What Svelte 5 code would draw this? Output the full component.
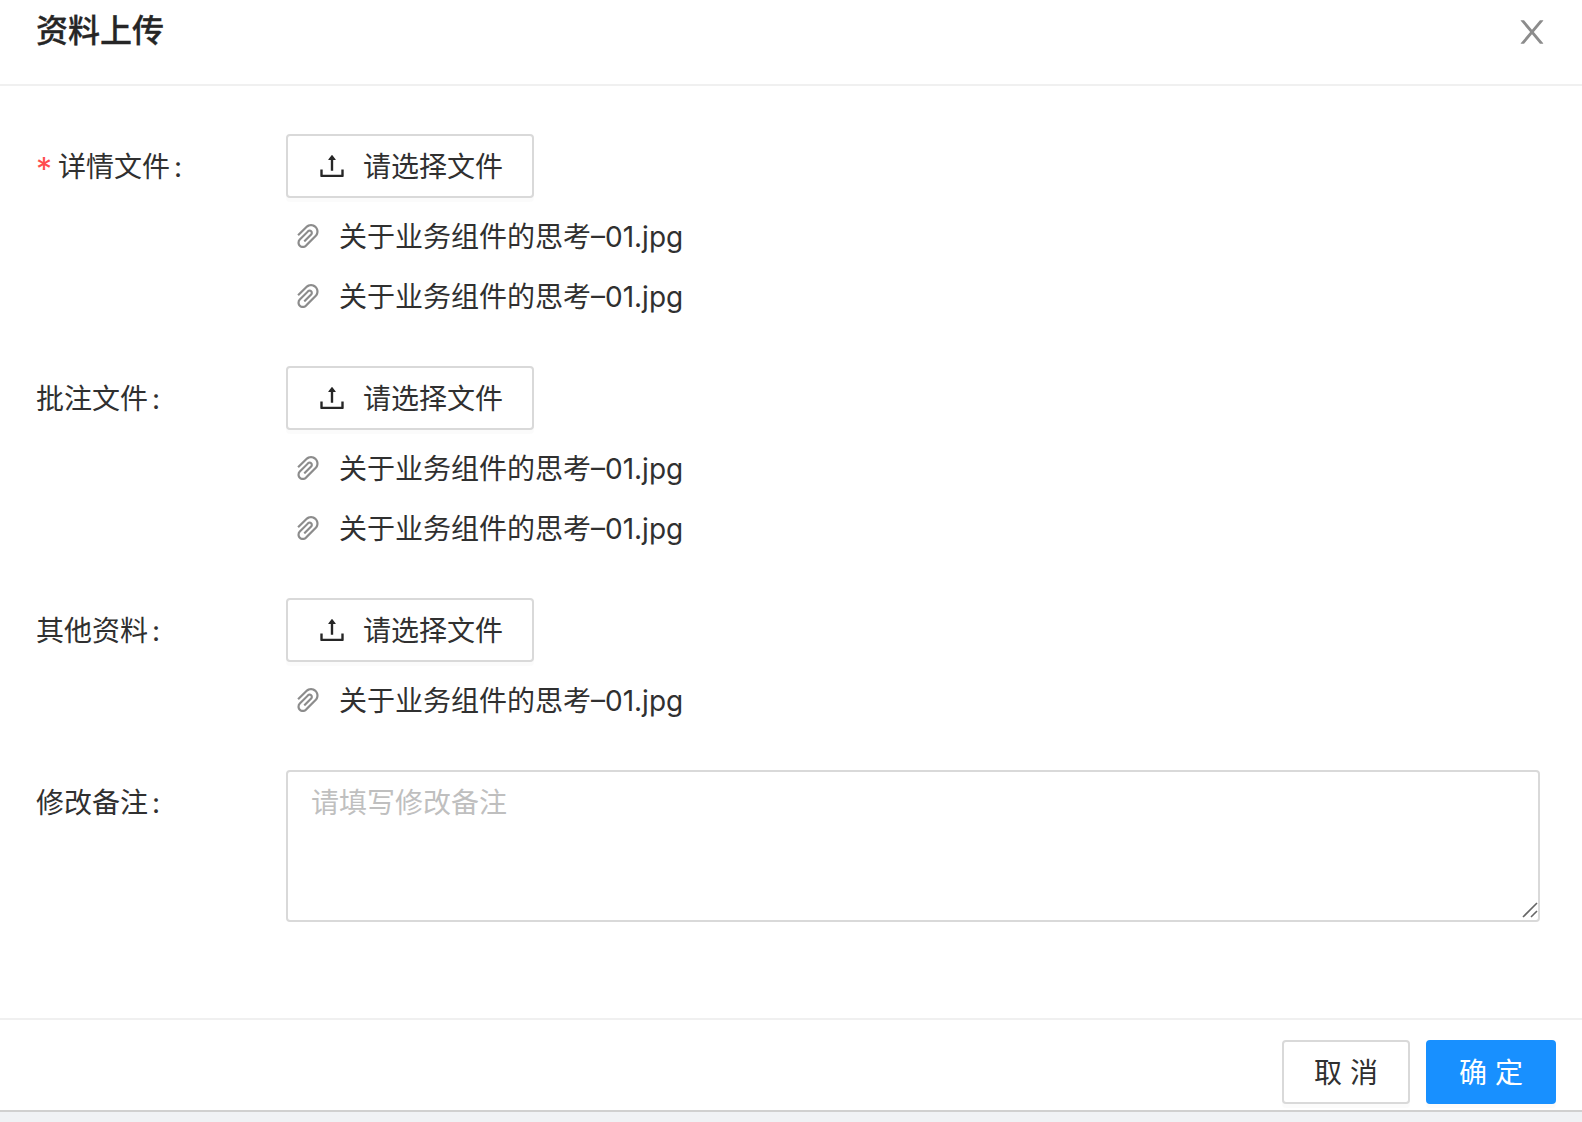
<script>
  const sections = [
    { label: '详情文件', required: true, files: ['关于业务组件的思考–01.jpg', '关于业务组件的思考–01.jpg'] },
    { label: '批注文件', required: false, files: ['关于业务组件的思考–01.jpg', '关于业务组件的思考–01.jpg'] },
    { label: '其他资料', required: false, files: ['关于业务组件的思考–01.jpg'] }
  ];
</script>

<div class="page">
  <div class="modal">
    <header class="modal-header">
      <h2 class="modal-title">资料上传</h2>
      <button class="close-btn" aria-label="关闭">
        <svg viewBox="64 64 896 896" width="32" height="32" fill="#8c8c8c">
          <path d="M563.8 512l262.5-312.9c4.4-5.2.7-13.1-6.1-13.1h-79.8c-4.7 0-9.2 2.1-12.3 5.7L511.6 449.8 295.1 191.7c-3-3.6-7.5-5.7-12.3-5.7H203c-6.8 0-10.5 7.9-6.1 13.1L459.4 512 196.9 824.9A7.95 7.95 0 0 0 203 838h79.8c4.7 0 9.2-2.1 12.3-5.7l216.5-258.1 216.5 258.1c3 3.6 7.5 5.7 12.3 5.7h79.8c6.8 0 10.5-7.9 6.1-13.1L563.8 512z" />
        </svg>
      </button>
    </header>

    <div class="modal-body">
      {#each sections as section}
        <div class="form-row">
          <div class="form-label">
            {#if section.required}<span class="required">*</span>{/if}{section.label}<span class="colon">:</span>
          </div>
          <div class="form-control">
            <button class="upload-btn">
              <svg viewBox="64 64 896 896" width="28" height="28" fill="#262626">
                <path d="M400 317.7h73.9V656c0 4.4 3.6 8 8 8h60c4.4 0 8-3.6 8-8V317.7H624c6.7 0 10.4-7.7 6.3-12.9L518.3 163a8 8 0 0 0-12.6 0l-112 141.7c-4.1 5.3-.4 13 6.3 13zM878 626h-60c-4.4 0-8 3.6-8 8v154H214V634c0-4.4-3.6-8-8-8h-60c-4.4 0-8 3.6-8 8v198c0 17.7 14.3 32 32 32h684c17.7 0 32-14.3 32-32V634c0-4.4-3.6-8-8-8z" />
              </svg>
              <span>请选择文件</span>
            </button>
            <ul class="file-list">
              {#each section.files as file}
                <li class="file-item">
                  <svg viewBox="64 64 896 896" width="28" height="28" fill="#8c8c8c">
                    <path d="M779.3 196.6c-94.2-94.2-247.6-94.2-341.7 0l-261 260.8c-1.7 1.7-2.6 4-2.6 6.4s.9 4.7 2.6 6.4l36.9 36.9a9 9 0 0 0 12.7 0l261-260.8c32.4-32.4 75.5-50.2 121.3-50.2s88.9 17.8 121.2 50.2c32.4 32.4 50.2 75.5 50.2 121.2 0 45.8-17.8 88.8-50.2 121.2l-266 265.9-43.1 43.1c-40.3 40.3-105.8 40.3-146.1 0-19.5-19.5-30.2-45.4-30.2-73s10.7-53.5 30.2-73l263.9-263.8c6.7-6.6 15.5-10.3 24.9-10.3h.1c9.4 0 18.1 3.7 24.7 10.3 6.7 6.7 10.3 15.5 10.3 24.9 0 9.3-3.7 18.1-10.3 24.7L372.4 653c-1.7 1.7-2.6 4-2.6 6.4s.9 4.7 2.6 6.4l36.9 36.9a9 9 0 0 0 12.7 0l215.6-215.6c19.9-19.9 30.8-46.3 30.8-74.4s-11-54.6-30.8-74.4c-41.1-41.1-107.9-41-149 0L463 364 224.8 602.1A172.22 172.22 0 0 0 174 724.8c0 46.3 18.1 89.8 50.8 122.5 33.9 33.8 78.3 50.7 122.7 50.7 44.4 0 88.8-16.9 122.6-50.7l309.2-309C824.8 492.7 850 432 850 367.5c.1-64.6-25.1-125.3-70.7-170.9z" />
                  </svg>
                  <span class="file-name">{file}</span>
                </li>
              {/each}
            </ul>
          </div>
        </div>
      {/each}

      <div class="form-row">
        <div class="form-label">修改备注<span class="colon">:</span></div>
        <div class="form-control note-wrap">
          <textarea class="note" placeholder="请填写修改备注"></textarea>
          <svg class="resizer" viewBox="0 0 16 16" width="16" height="16" fill="none" stroke="#666" stroke-width="1.6">
            <path d="M1 15 L15 1 M9 15 L15 9" />
          </svg>
        </div>
      </div>
    </div>

    <footer class="modal-footer">
      <button class="btn">取 消</button>
      <button class="btn primary">确 定</button>
    </footer>
  </div>
</div>

<style>
  :global(body) {
    margin: 0;
    background: #f0f2f5;
  }
  .page {
    height: 1122px;
    font-family: Inter, "Noto Sans CJK SC", sans-serif;
    font-size: 28px;
    color: #303030;
  }
  .modal {
    height: 1110px;
    background: #fff;
    border-bottom: 2px solid #d0d0d0;
    display: flex;
    flex-direction: column;
  }
  .modal-header {
    height: 86px;
    box-sizing: border-box;
    border-bottom: 2px solid #f0f0f0;
    padding: 0 34px 0 36px;
    display: flex;
    justify-content: space-between;
    align-items: flex-start;
  }
  .modal-title {
    margin: 8px 0 0;
    font-size: 32px;
    line-height: 46px;
    font-weight: 500;
    color: #262626;
    -webkit-text-stroke: 0.3px #262626;
  }
  .close-btn {
    margin-top: 16px;
    padding: 0;
    border: none;
    background: none;
    line-height: 0;
  }
  .modal-body {
    flex: 1;
    padding: 48px 42px 0 36px;
  }
  .form-row {
    display: flex;
    margin-bottom: 40px;
  }
  .form-label {
    width: 250px;
    flex: none;
    line-height: 66px;
    white-space: nowrap;
  }
  .required {
    color: #ff4d4f;
    font-size: 32px;
    line-height: 1;
    margin-right: 6px;
    vertical-align: -4px;
  }
  .colon {
    margin-left: 4px;
  }
  .form-control {
    flex: 1;
  }
  .upload-btn {
    width: 248px;
    height: 64px;
    box-sizing: border-box;
    background: #fff;
    border: 2px solid #d9d9d9;
    border-radius: 4px;
    box-shadow: 0 4px 0 rgba(0, 0, 0, 0.015);
    font: inherit;
    color: inherit;
    display: flex;
    align-items: center;
    justify-content: center;
    gap: 17px;
    padding: 0 0 0 1px;
  }
  .upload-btn span {
    position: relative;
    top: -1px;
  }
  .file-list {
    list-style: none;
    margin: 8px 0 0;
    padding: 0;
  }
  .file-item {
    height: 60px;
    display: flex;
    align-items: center;
    gap: 17px;
    padding-left: 8px;
  }
  .file-name {
    position: relative;
    top: -1px;
  }
  .note-wrap {
    position: relative;
  }
  .note {
    display: block;
    width: 100%;
    height: 152px;
    box-sizing: border-box;
    border: 2px solid #d9d9d9;
    border-radius: 4px;
    padding: 10px 23px;
    font: inherit;
    line-height: 42px;
    color: inherit;
    outline: none;
    resize: none;
  }
  .note::placeholder {
    color: #bfbfbf;
  }
  .resizer {
    position: absolute;
    right: 2px;
    bottom: 4px;
  }
  .modal-footer {
    height: 92px;
    box-sizing: border-box;
    border-top: 2px solid #f0f0f0;
    padding: 20px 26px 0 0;
    display: flex;
    justify-content: flex-end;
    gap: 16px;
  }
  .btn {
    height: 64px;
    width: 128px;
    box-sizing: border-box;
    background: #fff;
    border: 2px solid #d9d9d9;
    border-radius: 4px;
    font: inherit;
    color: inherit;
    padding: 0 0 3px;
    box-shadow: 0 4px 0 rgba(0, 0, 0, 0.015);
  }
  .btn.primary {
    width: 130px;
    background: #1890ff;
    border-color: #1890ff;
    color: #fff;
  }
</style>
